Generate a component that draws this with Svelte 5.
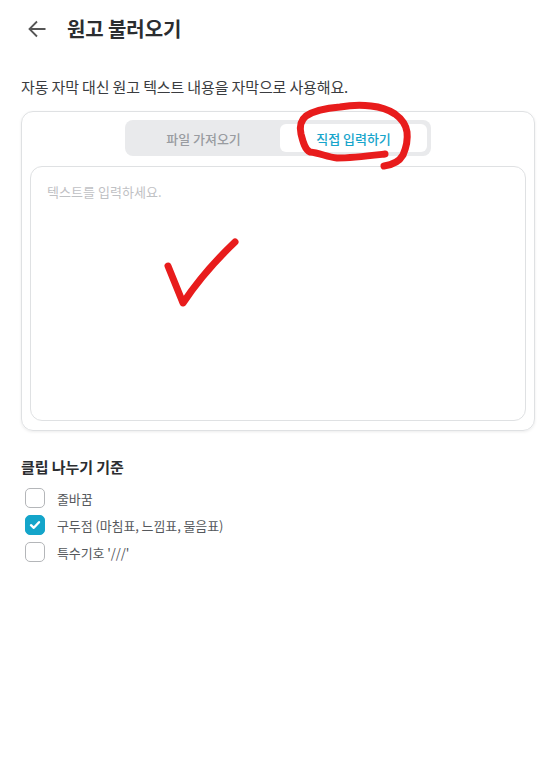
<script lang="ts">
  // Script import screen: source tabs, text box and the clip split options.
  let tab = $state("direct");
  let text = $state("");
  let options = $state([
    { label: "줄바꿈", checked: false },
    { label: "구두점 (마침표, 느낌표, 물음표)", checked: true },
    { label: "특수기호 '///'", checked: false },
  ]);
</script>

<div class="page">
  <header>
    <button class="back" aria-label="뒤로">
      <svg width="20" height="20" viewBox="0 0 20 20" fill="none" stroke="#555" stroke-width="1.8">
        <path d="M18.5 10H2.5M10 2.5 2.5 10l7.5 7.5" />
      </svg>
    </button>
    <h1>원고 불러오기</h1>
  </header>

  <p class="desc">자동 자막 대신 원고 텍스트 내용을 자막으로 사용해요.</p>

  <section class="card">
    <div class="tabs">
      <button class="file" class:active={tab === "file"} onclick={() => (tab = "file")}>파일 가져오기</button>
      <button class="direct" class:active={tab === "direct"} onclick={() => (tab = "direct")}>직접 입력하기</button>
    </div>
    <textarea bind:value={text} placeholder="텍스트를 입력하세요."></textarea>
  </section>

  <h2>클립 나누기 기준</h2>
  <ul>
    {#each options as opt}
      <li>
        <label>
          <input type="checkbox" bind:checked={opt.checked} />
          <span class="box">
            {#if opt.checked}
              <svg width="12" height="10" viewBox="0 0 12 10" fill="none" stroke="#fff" stroke-width="2.4" stroke-linecap="round" stroke-linejoin="round">
                <path d="M2 5.2 4.8 7.8 10 2.2" />
              </svg>
            {/if}
          </span>
          <span class="text">{opt.label}</span>
        </label>
      </li>
    {/each}
  </ul>

  <!-- hand-drawn marks on top of the screenshot -->
  <svg class="marks" width="554" height="779" viewBox="0 0 554 779" fill="none" stroke="#e81c1c" stroke-linecap="round" stroke-linejoin="round">
    <path stroke-width="7" d="M385 154C368 156 352 158 337 158 327 157 320 153 310 152 305 150 303 142 301 134 299 125 301 120 306 116 315 110 327 108 340 107 352 105 362 105 371 106 381 107 389 110 395 114 402 119 406 125 407 132 408 140 406 148 403 155 399 162 392 165 384 166" />
    <path stroke-width="7" d="M168 266 183 303C195 285 215 261 235 242" />
  </svg>
</div>

<style>
  :global(body) {
    margin: 0;
    background: #fff;
  }
  .page {
    position: relative;
    width: 554px;
    height: 779px;
    box-sizing: border-box;
    padding: 0 19px 0 21px;
    font-family: "Noto Sans CJK KR", "Noto Sans", sans-serif;
    color: #333;
    overflow: hidden;
  }
  header {
    display: flex;
    align-items: center;
    height: 57px;
  }
  .back {
    display: flex;
    padding: 0;
    margin-left: 6px;
    border: none;
    background: none;
    cursor: pointer;
  }
  h1 {
    margin: 0 0 0 20px;
    font-size: 20px;
    font-weight: 700;
    letter-spacing: -0.1px;
    color: #2b2d30;
  }
  .desc {
    margin: 19px 0 0;
    font-size: 15px;
    line-height: 22px;
    letter-spacing: -0.14px;
    color: #3a3c40;
  }
  .card {
    box-sizing: border-box;
    height: 320px;
    margin-top: 13px;
    padding: 8px 8px 9px;
    display: flex;
    flex-direction: column;
    align-items: center;
    border: 1px solid #dfe1e3;
    border-radius: 12px;
    box-shadow: 0 1px 3px rgba(0, 0, 0, 0.08);
  }
  .tabs {
    display: flex;
    box-sizing: border-box;
    width: 306px;
    height: 36px;
    padding: 4px;
    border-radius: 8px;
    background: #e9eaec;
  }
  .tabs button {
    border: none;
    border-radius: 6px;
    background: none;
    font: inherit;
    font-size: 13px;
    font-weight: 500;
    letter-spacing: -0.02px;
    color: #999ca1;
    cursor: pointer;
  }
  .tabs .file {
    width: 149px;
    margin-right: 2px;
  }
  .tabs .direct {
    width: 147px;
  }
  .tabs button.active {
    background: #fff;
    color: #17a5cb;
  }
  textarea {
    box-sizing: border-box;
    width: 100%;
    flex: 1;
    margin-top: 10px;
    padding: 15px 16px;
    border: 1px solid #dfe1e3;
    border-radius: 12px;
    outline: none;
    resize: none;
    font: inherit;
    font-size: 13px;
    line-height: 20px;
    letter-spacing: 0.05px;
  }
  textarea::placeholder {
    color: #bfc1c4;
  }
  h2 {
    margin: 25px 0 0;
    font-size: 15px;
    line-height: 22px;
    font-weight: 700;
    letter-spacing: -0.07px;
    color: #2b2d30;
  }
  ul {
    list-style: none;
    margin: 10px 0 0 4px;
    padding: 0;
    display: flex;
    flex-direction: column;
    gap: 7px;
  }
  label {
    display: flex;
    align-items: center;
    gap: 12px;
    height: 20px;
    font-size: 13px;
    letter-spacing: -0.1px;
    color: #55585c;
    cursor: pointer;
  }
  input {
    display: none;
  }
  .box {
    box-sizing: border-box;
    width: 20px;
    height: 20px;
    display: flex;
    align-items: center;
    justify-content: center;
    border: 1px solid #b4b6b9;
    border-radius: 5px;
  }
  input:checked + .box {
    border-color: #14a5ca;
    background: #14a5ca;
  }
  .marks {
    position: absolute;
    top: 0;
    left: 0;
    pointer-events: none;
  }
</style>
